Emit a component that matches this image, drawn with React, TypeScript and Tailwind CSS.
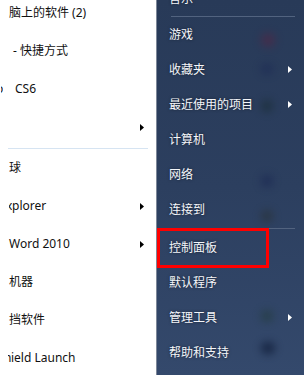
import React from "react";

const font = '"Segoe UI", "Noto Sans", "Noto Sans CJK SC", sans-serif';

function ArrowL() {
  return (
    <svg width="4" height="7" viewBox="0 0 4 7" className="shrink-0">
      <path d="M0 0 L4 3.5 L0 7 Z" fill="#000" />
    </svg>
  );
}
function ArrowR() {
  return (
    <svg width="4" height="7" viewBox="0 0 4 7" className="shrink-0">
      <path d="M0 0 L4 3.5 L0 7 Z" fill="#fff" />
    </svg>
  );
}

function LRow({ children, arrow }: { children?: React.ReactNode; arrow?: boolean }) {
  return (
    <div className="h-[38px] shrink-0 flex items-center justify-between pl-[9px] pr-[12px] whitespace-nowrap text-[12px] text-[#111]">
      <div className="flex items-center">{children}</div>
      {arrow ? <ArrowL /> : null}
    </div>
  );
}

function RRow({ children, arrow }: { children?: React.ReactNode; arrow?: boolean }) {
  return (
    <div className="h-[35px] shrink-0 flex items-center justify-between pl-[12px] pr-[12px] whitespace-nowrap text-[12px] text-[#f4f6fa] [text-shadow:0_0_3px_rgba(0,0,0,0.5)]">
      <div>{children}</div>
      {arrow ? <ArrowR /> : null}
    </div>
  );
}

function Clip({ ch, w, off }: { ch: string; w: number; off: number }) {
  return (
    <span className="inline-block overflow-hidden" style={{ width: w }}>
      <span className="inline-block" style={{ marginLeft: -off }}>{ch}</span>
    </span>
  );
}

export default function App() {
  return (
    <div className="w-[304px] h-[375px] overflow-hidden flex bg-white" style={{ fontFamily: font }}>
      <div className="w-[156px] shrink-0 overflow-hidden bg-white flex flex-col">
        <div className="mt-[-6px]" />
        <LRow>脑上的软件 (2)</LRow>
        <LRow><span className="pl-[4px]">- 快捷方式</span></LRow>
        <LRow>
          <span className="ml-[-8px] flex items-center">
            <Clip ch="o" w={2} off={5} />
            <span className="pl-[12px]">CS6</span>
          </span>
        </LRow>
        <LRow arrow />
        <div className="h-[3px] shrink-0 flex items-end pl-[8px] pr-[8px]">
          <div className="h-px w-full bg-[#d6e4f2]" />
        </div>
        <LRow>球</LRow>
        <LRow arrow>
          <Clip ch="x" w={3} off={3} />
          <span>plorer</span>
        </LRow>
        <LRow arrow>Word 2010</LRow>
        <LRow>机器</LRow>
        <LRow>挡软件</LRow>
        <LRow>
          <span className="ml-[-1px] flex items-center">
            <Clip ch="h" w={3} off={4} />
            <span>ield Launch</span>
          </span>
        </LRow>
      </div>
      <div className="w-px shrink-0 bg-[#7d8798]" />
      <div className="flex-1 relative overflow-hidden bg-gradient-to-b from-[#283a58] via-[#2c3f5f] to-[#34496c] flex flex-col">
        <div className="absolute left-[104px] top-[33px] w-[14px] h-[14px] rounded-full bg-[#4a2a48] blur-[4px] opacity-80" />
        <div className="absolute left-[104px] top-[64px] w-[12px] h-[10px] rounded-full bg-[#1e2c55] blur-[4px] opacity-80" />
        <div className="absolute left-[104px] top-[100px] w-[12px] h-[12px] rounded-full bg-[#1c2f3a] blur-[4px] opacity-80" />
        <div className="absolute left-[104px] top-[175px] w-[12px] h-[12px] rounded-full bg-[#1a2752] blur-[4px] opacity-70" />
        <div className="absolute left-[104px] top-[210px] w-[12px] h-[12px] rounded-full bg-[#2a3236] blur-[4px] opacity-70" />
        <div className="absolute left-[104px] top-[310px] w-[12px] h-[12px] rounded-full bg-[#233c3c] blur-[4px] opacity-70" />
        <div className="absolute left-[104px] top-[342px] w-[14px] h-[12px] rounded-full bg-[#14223f] blur-[4px] opacity-90" />
        <div className="relative flex flex-col">
          <div className="mt-[-19px]" />
          <RRow>音乐</RRow>
          <div className="h-px shrink-0 ml-[14px] mr-[9px] bg-[#52637f]" />
          <RRow>游戏</RRow>
          <RRow arrow>收藏夹</RRow>
          <RRow arrow>最近使用的项目</RRow>
          <RRow>计算机</RRow>
          <RRow>网络</RRow>
          <RRow>连接到</RRow>
          <div className="h-[3px] shrink-0 flex flex-col justify-end">
            <div className="h-px ml-[14px] mr-[9px] bg-[#52637f] mb-px" />
          </div>
          <div className="relative">
            <RRow>控制面板</RRow>
            <div className="absolute left-0 top-[-2px] w-[112px] h-[40px] border-[3px] border-[#ff0000]" />
          </div>
          <RRow>默认程序</RRow>
          <RRow arrow>管理工具</RRow>
          <RRow>帮助和支持</RRow>
        </div>
      </div>
    </div>
  );
}
